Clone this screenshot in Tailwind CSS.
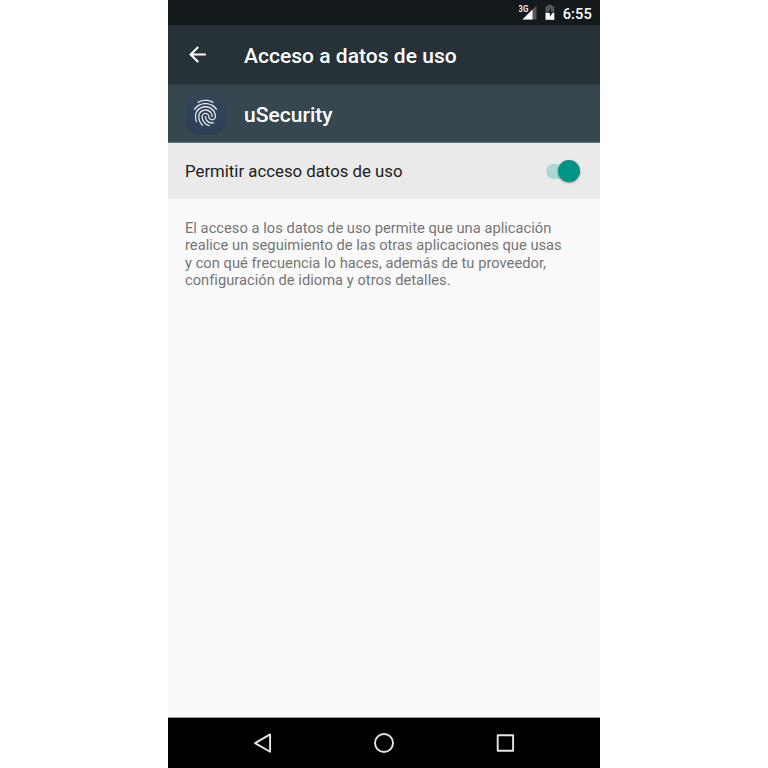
<!DOCTYPE html>
<html lang="es">
<head>
<meta charset="utf-8">
<title>Acceso a datos de uso</title>
<script src="https://cdn.jsdelivr.net/npm/@tailwindcss/browser@4"></script>
</head>
<body class="bg-white font-['Roboto',sans-serif]">
<div class="mx-auto flex h-[768px] w-[432px] flex-col overflow-hidden bg-[#fafafa]">
  <div class="flex h-[25px] shrink-0 items-center justify-end bg-[#14191c] pr-2 text-white">
    <svg class="h-[25px] w-[44px]" viewBox="0 0 44 25">
      <text x="-0.7" y="12" font-size="8.5" font-weight="700" fill="#e8eaeb" textLength="10" lengthAdjust="spacingAndGlyphs">3G</text>
      <path d="M17.5 5.5V19.5H3.5z" fill="#54585b"/>
      <path d="M13.5 9.5V19.5H3.5z" fill="#fff"/>
      <path d="M26.5 6.2h2.2V4.8h4.2v1.4h2.4V13h-8.8z" fill="#54585b"/>
      <path d="M26.5 13h8.8v6.8h-8.8z" fill="#fff"/>
      <path d="M32 7.8l-3.2 5.2h2.1v4.1l3.2-5.4h-2.1z" fill="#14191c"/>
    </svg>
    <span class="mt-[3px] text-[14.7px] leading-none font-medium tracking-[0.1px]">6:55</span>
  </div>
  <div class="flex h-[59px] shrink-0 items-center bg-[#263238] text-white">
    <svg class="ml-[17px] h-[25px] w-[25px]" viewBox="0 0 24 24" fill="#fff"><path d="M20 11H7.83l5.59-5.59L12 4l-8 8 8 8 1.41-1.41L7.83 13H20v-2z"/></svg>
    <h1 class="ml-[34px] pt-[4px] text-[21px] leading-none font-medium tracking-[0.03px]">Acceso a datos de uso</h1>
  </div>
  <div class="flex h-[59px] shrink-0 items-center border-b border-[#66757c] bg-[#37474f] bg-linear-to-b from-[#2f3e45] from-0% to-[#37474f] to-[4px] text-white">
    <div class="ml-[18px] flex h-[40px] w-[39px] items-center justify-center rounded-[12px] bg-linear-to-b from-[#35465a] to-[#2c4059] shadow-[0_1px_1px_#2c3b43]">
      <svg class="h-[32px] w-[31px]" viewBox="0 0 24 24" preserveAspectRatio="none" fill="#e4e7ea"><path d="M17.81 4.47c-.08 0-.16-.02-.23-.06C15.66 3.42 14 3 12.01 3c-1.98 0-3.86.47-5.57 1.41-.24.13-.54.04-.68-.2-.13-.24-.04-.55.2-.68C7.82 2.52 9.86 2 12.01 2c2.13 0 3.99.47 6.03 1.52.25.13.34.43.21.67-.09.18-.26.28-.44.28zM3.5 9.72c-.1 0-.2-.03-.29-.09-.23-.16-.28-.47-.12-.7.99-1.4 2.25-2.5 3.75-3.27C9.98 4.04 14 4.03 17.15 5.65c1.5.77 2.76 1.86 3.75 3.25.16.22.11.54-.12.7-.23.16-.54.11-.7-.12-.9-1.26-2.04-2.25-3.39-2.94-2.87-1.47-6.54-1.47-9.4.01-1.36.7-2.5 1.7-3.4 2.96-.08.14-.23.21-.39.21zm6.25 12.07c-.13 0-.26-.05-.35-.15-.87-.87-1.34-1.43-2.01-2.64-.69-1.23-1.05-2.73-1.05-4.34 0-2.97 2.54-5.39 5.66-5.39s5.66 2.42 5.66 5.39c0 .28-.22.5-.5.5s-.5-.22-.5-.5c0-2.42-2.09-4.39-4.66-4.39-2.57 0-4.66 1.97-4.66 4.39 0 1.44.32 2.77.93 3.85.64 1.15 1.08 1.64 1.85 2.42.19.2.19.51 0 .71-.11.1-.24.15-.37.15zm7.17-1.85c-1.19 0-2.24-.3-3.1-.89-1.49-1.01-2.38-2.65-2.38-4.39 0-.28.22-.5.5-.5s.5.22.5.5c0 1.41.72 2.74 1.94 3.56.71.48 1.54.71 2.54.71.24 0 .64-.03 1.04-.1.27-.05.53.13.58.41.05.27-.13.53-.41.58-.57.11-1.07.12-1.21.12zM14.91 22c-.04 0-.09-.01-.13-.02-1.59-.44-2.63-1.03-3.72-2.1-1.4-1.39-2.17-3.24-2.17-5.22 0-1.62 1.38-2.94 3.08-2.94 1.7 0 3.08 1.32 3.08 2.94 0 1.07.93 1.94 2.08 1.94s2.08-.87 2.08-1.94c0-3.77-3.25-6.83-7.25-6.83-2.84 0-5.44 1.58-6.61 4.03-.39.81-.59 1.76-.59 2.8 0 .78.07 2.01.67 3.61.1.26-.03.55-.29.64-.26.1-.55-.04-.64-.29-.49-1.31-.73-2.61-.73-3.96 0-1.2.23-2.29.68-3.24 1.33-2.79 4.28-4.6 7.51-4.6 4.55 0 8.25 3.51 8.25 7.83 0 1.62-1.38 2.94-3.08 2.94s-3.08-1.32-3.08-2.94c0-1.07-.93-1.94-2.08-1.94s-2.08.87-2.08 1.94c0 1.71.66 3.31 1.87 4.51.95.94 1.86 1.46 3.27 1.85.27.07.42.35.35.61-.05.23-.26.38-.47.38z"/></svg>
    </div>
    <h2 class="ml-[19px] pt-[4px] text-[21px] leading-none font-medium tracking-[0.03px]">uSecurity</h2>
  </div>
  <div class="flex h-[56px] shrink-0 items-center justify-between bg-[#eaeaea] pr-[20px] pl-[17px]">
    <span class="pt-px text-[16.8px] leading-none text-[#212121]">Permitir acceso datos de uso</span>
    <div class="flex h-[15px] w-[34px] items-center justify-end rounded-full bg-[#aed6d2]">
      <div class="mr-[0.5px] h-[21.5px] w-[21.5px] shrink-0 rounded-full bg-[#009485] shadow-[0_1px_2px_#0006]"></div>
    </div>
  </div>
  <p class="pt-[21px] pl-[17px] text-[14.7px] leading-[17.25px] tracking-[0.02px] whitespace-nowrap text-[#757575]">El acceso a los datos de uso permite que una aplicación<br>realice un seguimiento de las otras aplicaciones que usas<br>y con qué frecuencia lo haces, además de tu proveedor,<br>configuración de idioma y otros detalles.</p>
  <div class="mt-auto flex h-[51px] shrink-0 items-center justify-center gap-[96px] border-t border-[#999] bg-black">
    <svg class="h-[25px] w-[25px]" viewBox="0.5 0.5 25 25" fill="none" stroke="#e6e6e6" stroke-width="1.9" stroke-linejoin="round"><path d="M19.6 3.9v17.4L4.6 12.6z"/></svg>
    <svg class="h-[25px] w-[25px]" viewBox="0.5 0.5 25 25" fill="none" stroke="#e6e6e6" stroke-width="1.9"><circle cx="12.5" cy="12.5" r="9"/></svg>
    <svg class="h-[25px] w-[25px]" viewBox="0.5 0.5 25 25" fill="none" stroke="#e6e6e6" stroke-width="1.9" stroke-linejoin="round"><path d="M5.2 4.7h15.4v15.5H5.2z"/></svg>
  </div>
</div>
</body>
</html>
